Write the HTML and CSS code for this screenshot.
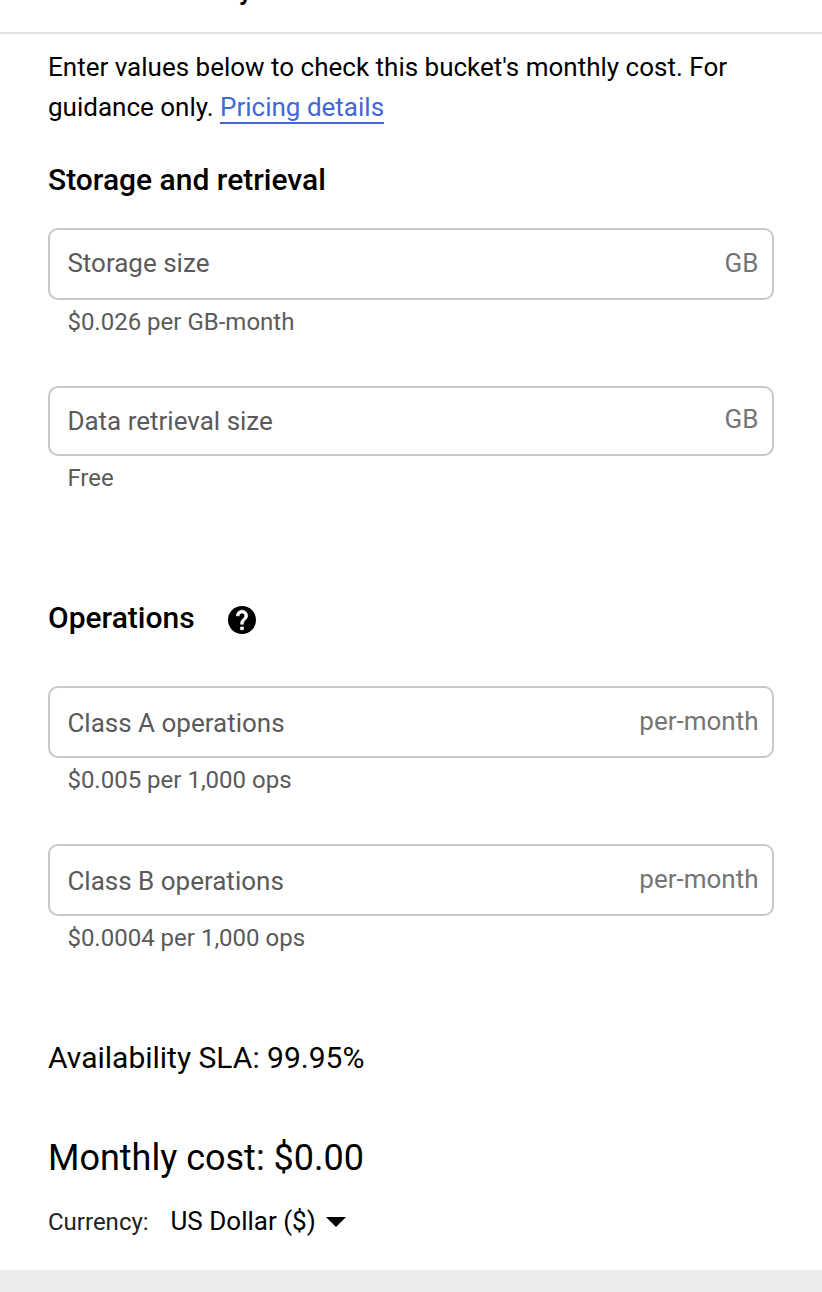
FILE: index.html
```html
<!DOCTYPE html>
<html lang="en">
<head>
<meta charset="utf-8">
<title>Monthly cost estimate</title>
<link rel="stylesheet" href="styles.css">
</head>
<body>
<main class="panel">
  <header class="panel-header"><h1 class="panel-title">Estimate monthly cost</h1></header>
  <div class="content">
    <p class="intro">Enter values below to check this bucket's monthly cost. For guidance only. <a class="link" href="#">Pricing details</a></p>

    <section class="storage">
      <h2 class="section-title">Storage and retrieval</h2>
      <div class="field">
        <div class="box"><span class="label">Storage size</span><span class="unit">GB</span></div>
        <div class="hint">$0.026 per GB-month</div>
      </div>
      <div class="field">
        <div class="box box-short"><span class="label label-low">Data retrieval size</span><span class="unit">GB</span></div>
        <div class="hint">Free</div>
      </div>
    </section>

    <section class="operations">
      <div class="title-row">
        <h2 class="section-title">Operations</h2>
        <svg class="help" viewBox="2 2 20 20" aria-label="Help"><circle cx="12" cy="12" r="10"/><path class="help-mark" d="M13 19h-2v-2h2v2zm2.07-7.75-.9.92C13.45 12.9 13 13.5 13 15h-2v-.5c0-1.1.45-2.1 1.17-2.83l1.24-1.26c.37-.36.59-.86.59-1.41 0-1.1-.9-2-2-2s-2 .9-2 2H8c0-2.21 1.79-4 4-4s4 1.79 4 4c0 .88-.36 1.68-.93 2.25z"/></svg>
      </div>
      <div class="field">
        <div class="box"><span class="label label-low">Class A operations</span><span class="unit">per-month</span></div>
        <div class="hint">$0.005 per 1,000 ops</div>
      </div>
      <div class="field">
        <div class="box"><span class="label label-low">Class B operations</span><span class="unit">per-month</span></div>
        <div class="hint">$0.0004 per 1,000 ops</div>
      </div>
    </section>

    <p class="sla">Availability SLA: 99.95%</p>
    <p class="total">Monthly cost: $0.00</p>
    <div class="currency">
      <span class="currency-label">Currency:</span>
      <span class="currency-value">US Dollar ($)</span>
      <svg class="caret" viewBox="0 0 20 10"><path d="M0 0h20L10 10z"/></svg>
    </div>
  </div>
  <footer class="strip"></footer>
</main>
</body>
</html>
```
FILE: styles.css
```css
* { box-sizing: border-box; }
body { margin: 0; background: #fff; color: #000; font-family: Roboto, sans-serif; font-size: 26px; }
h1, h2, p { margin: 0; font-weight: 400; }
.panel { display: flex; flex-direction: column; height: 1292px; overflow: hidden; }
.panel-header { display: flex; align-items: flex-end; flex: none; height: 34px; padding: 0 48px 21px; border-bottom: 2px solid #e0e0e0; overflow: hidden; }
.panel-title { font-size: 26px; font-weight: 600; line-height: 40px; white-space: nowrap; }
.content { flex: 1; padding: 13px 48px 0; }
.intro { line-height: 40px; }
.link { color: #4167d8; text-decoration: none; border-bottom: 2px solid #4167d8; }
.storage { padding-top: 33px; }
.section-title { font-size: 30px; font-weight: 500; line-height: 40px; }
.storage .section-title { margin-bottom: 28px; }
.field { height: 158px; }
.box { display: flex; justify-content: space-between; height: 72px; padding: 13px 13.5px 0 17.4px; border: 2px solid #c8c8c8; border-radius: 10px; line-height: 40px; }
.box-short { height: 70px; padding-top: 11px; }
.label { color: #5a5a5a; }
.label-low { padding-top: 2px; }
.unit { color: #757575; }
.hint { padding: 6px 0 0 19.4px; font-size: 24px; line-height: 32px; color: #5a5a5a; }
.operations { padding-top: 54px; }
.title-row { display: flex; align-items: center; gap: 33px; height: 40px; margin-bottom: 48px; }
.help { width: 28px; height: 28px; margin-top: 4px; }
.help-mark { fill: #fff; stroke: #fff; stroke-width: .5; }
.sla { padding-top: 36px; font-size: 30px; line-height: 40px; }
.total { padding-top: 56px; font-size: 36px; line-height: 48px; }
.currency { display: flex; align-items: baseline; padding-top: 19px; line-height: 40px; }
.currency-label { width: 122.5px; font-size: 24px; color: #212121; }
.currency-value { width: 155.5px; }
.caret { width: 20px; height: 10px; align-self: center; }
.strip { flex: none; height: 22px; background: #ececec; }
```
